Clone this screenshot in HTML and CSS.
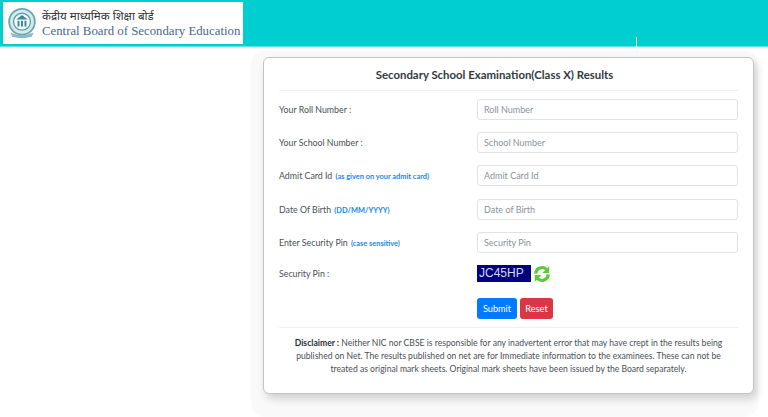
FILE: index.html
```html
<!DOCTYPE html>
<html lang="en">
<head>
    <meta charset="UTF-8">
    <meta name="viewport" content="width=device-width, initial-scale=1.0">
    <title>Secondary School Examination(Class X) Results</title>
    <link rel="stylesheet" href="styles.css">
</head>
<body>
    <header class="topbar">
        <div class="logo">
            <svg class="emblem" viewBox="0 0 36 36" width="32" height="37">
                <circle cx="18" cy="16" r="14.500" fill="#d4eaeb" stroke="#6aa5b2" stroke-width="2"/>
                <circle cx="18" cy="16" r="9.500" fill="#f4fafa" stroke="#5f9aa8" stroke-width="1.500"/>
                <path d="M11.500 13.500l6.500-5 6.500 5zM13 15h2.200v6.500H13zM16.900 15h2.200v6.500h-2.200zM20.800 15H23v6.500h-2.200z" fill="#3f8798"/>
                <path d="M5 28q13 6 26 0l-2 5q-11 3-22 0z" fill="#8db9c2"/>
            </svg>
            <div class="logo-text">
                <span class="logo-hindi">केंद्रीय माध्यमिक शिक्षा बोर्ड</span>
                <span class="logo-english">Central Board of Secondary Education</span>
            </div>
        </div>
        <span class="tick"></span>
    </header>
    <main class="page">
        <form class="card">
            <h1>Secondary School Examination(Class X) Results</h1>
            <div class="row">
                <label>Your Roll Number :</label>
                <input type="text" placeholder="Roll Number">
            </div>
            <div class="row">
                <label>Your School Number :</label>
                <input type="text" placeholder="School Number">
            </div>
            <div class="row">
                <label>Admit Card Id <small>(as given on your admit card)</small></label>
                <input type="text" placeholder="Admit Card Id">
            </div>
            <div class="row">
                <label>Date Of Birth <small>(DD/MM/YYYY)</small></label>
                <input type="text" placeholder="Date of Birth">
            </div>
            <div class="row">
                <label>Enter Security Pin <small>(case sensitive)</small></label>
                <input type="text" placeholder="Security Pin">
            </div>
            <div class="row row-pin">
                <label>Security Pin :</label>
                <div class="captcha">
                    <span class="captcha-code">JC45HP</span>
                    <svg class="refresh" viewBox="0 0 20 20" width="18" height="18">
                        <path d="M3 9.500a7 7 0 0 1 12-4.500" fill="none" stroke="#5cc93a" stroke-width="3.500"/>
                        <path d="M18 1.500v7.500h-7.500z" fill="#5cc93a"/>
                        <path d="M17 10.500a7 7 0 0 1-12 4.500" fill="none" stroke="#5cc93a" stroke-width="3.500"/>
                        <path d="M2 18.500v-7.500h7.500z" fill="#5cc93a"/>
                    </svg>
                </div>
            </div>
            <div class="row row-buttons">
                <span></span>
                <div class="buttons">
                    <button type="button" class="btn btn-blue">Submit</button>
                    <button type="reset" class="btn btn-red">Reset</button>
                </div>
            </div>
            <p class="disclaimer"><strong>Disclaimer :</strong> Neither NIC nor CBSE is responsible for any inadvertent error that may have crept in the results being published on Net. The results published on net are for Immediate information to the examinees. These can not be treated as original mark sheets. Original mark sheets have been issued by the Board separately.</p>
        </form>
    </main>
</body>
</html>
```
FILE: styles.css
```css
html, body {
    height: 100%;
}
body {
    margin: 0;
    background-color: #fff;
    font-family: Lato, "Open Sans", sans-serif;
    color: #495057;
    overflow: hidden;
}
.topbar {
    position: relative;
    z-index: 1;
    height: 47px;
    box-sizing: border-box;
    padding: 2px 3px;
    background-color: #00ced1;
    border-bottom: 1px solid #5fe3e3;
}
.tick {
    position: absolute;
    left: 636px;
    top: 37px;
    width: 1px;
    height: 18px;
    background-color: #e8fafa;
}
.logo {
    display: flex;
    align-items: center;
    gap: 4px;
    width: 240px;
    height: 42px;
    box-sizing: border-box;
    padding-left: 3px;
    background-color: #fff;
}
.emblem {
    flex: none;
}
.logo-text {
    display: flex;
    flex-direction: column;
    gap: 1px;
    white-space: nowrap;
}
.logo-hindi {
    font-family: "Noto Sans", "DejaVu Sans", sans-serif;
    font-size: 11.600px;
    line-height: 15px;
    color: #333;
}
.logo-english {
    font-family: "Liberation Serif", serif;
    font-size: 12.800px;
    line-height: 15px;
    color: #456a88;
}
.page {
    padding: 10px 14px 0 263px;
}
.card {
    width: 491px;
    height: 337px;
    box-sizing: border-box;
    padding: 0 15px;
    background-color: #fff;
    border: 1px solid #c4c4c4;
    border-radius: 6px;
    box-shadow: 3px 5px 9px rgba(0, 0, 0, 0.16), -4px 1px 2px 8px #f9f9f9, -4px 15px 2px 8px #f9f9f9;
}
h1 {
    margin: 0 0 8px;
    padding: 9px 28px 8px 0;
    height: 15px;
    box-sizing: content-box;
    border-bottom: 1px solid #f0f1f4;
    font-size: 11.400px;
    line-height: 15px;
    font-weight: 700;
    text-align: center;
    color: #343a40;
}
.row {
    display: grid;
    grid-template-columns: 198px 261px;
    align-items: center;
    height: 21px;
    margin-bottom: 12.200px;
}
label {
    font-size: 8.800px;
    color: #4a4f55;
}
small {
    margin-left: 1px;
    font-size: 7.400px;
    font-weight: 700;
    color: #1a86f0;
}
input {
    width: 100%;
    height: 21px;
    box-sizing: border-box;
    padding: 0 6px;
    border: 1px solid #dfe3e8;
    border-radius: 3px;
    font-family: inherit;
    font-size: 9px;
    color: #495057;
}
input::placeholder {
    color: #8b9299;
}
.row-pin {
    height: 18px;
    margin-bottom: 15px;
}
.captcha {
    display: flex;
    align-items: center;
    gap: 2px;
}
.captcha-code {
    width: 54px;
    height: 17px;
    padding-left: 2px;
    box-sizing: border-box;
    background-color: #000080;
    font-family: "Liberation Sans", Arial, sans-serif;
    font-size: 12px;
    line-height: 16px;
    color: #d8d8ef;
}
.row-buttons {
    margin-bottom: 0;
    padding-bottom: 8px;
    border-bottom: 1px solid #f0f1f4;
    height: 21px;
    box-sizing: content-box;
}
.buttons {
    display: flex;
    gap: 3px;
}
.btn {
    height: 21px;
    padding: 0;
    border: none;
    border-radius: 3px;
    font-family: inherit;
    font-size: 9.200px;
    color: #fff;
}
.btn-blue {
    width: 40px;
    background-color: #007bff;
}
.btn-red {
    width: 33px;
    background-color: #dc3545;
}
.disclaimer {
    margin: 9px 0 0;
    padding: 0 14px;
    font-size: 8.600px;
    line-height: 13px;
    text-align: center;
    color: #4a4f55;
}
.disclaimer strong {
    color: #2b2f33;
}
```
